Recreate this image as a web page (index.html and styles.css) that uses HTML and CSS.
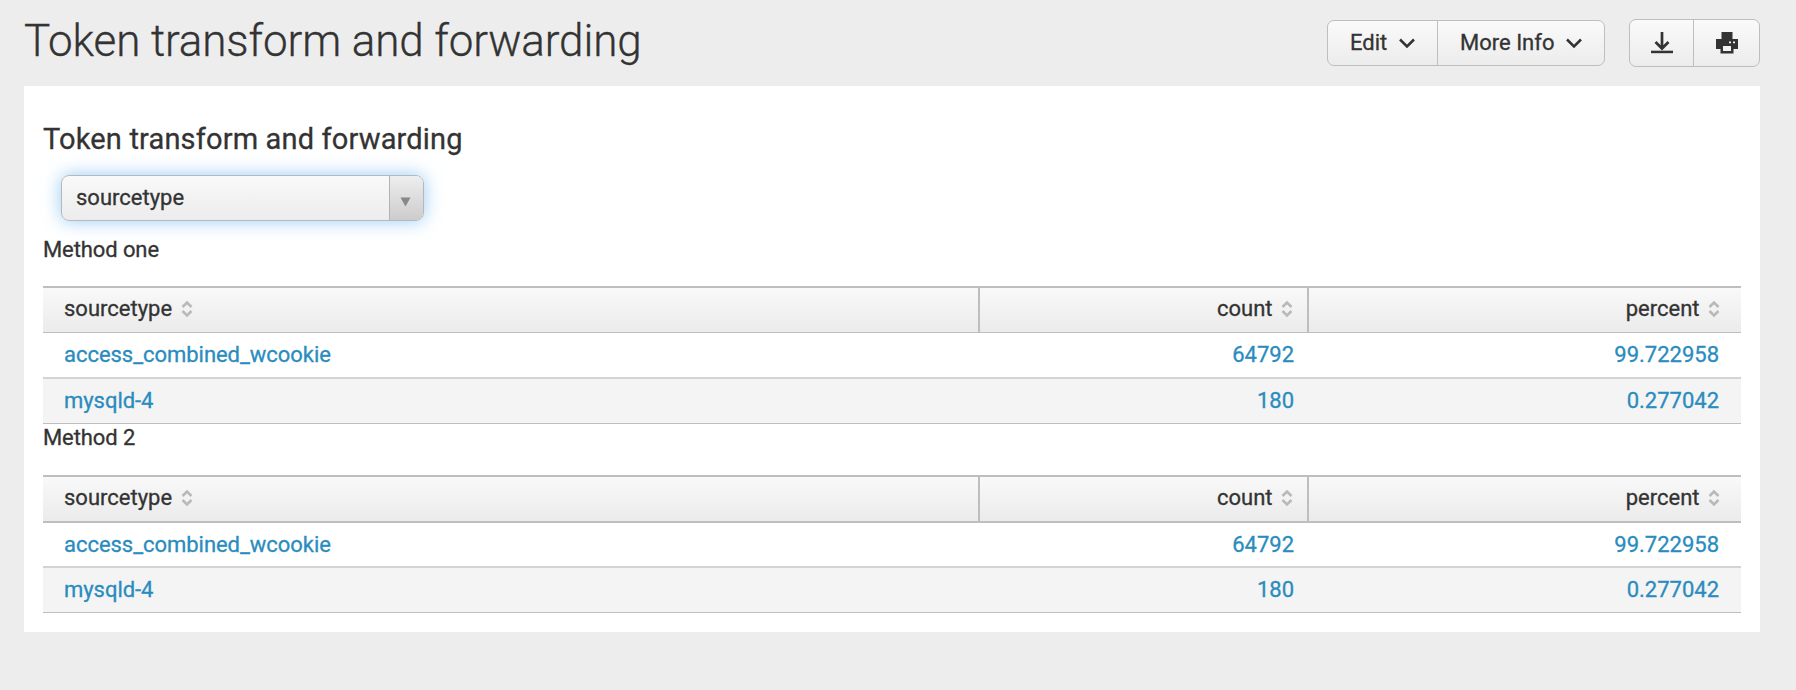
FILE: index.html
```html
<!DOCTYPE html>
<html lang="en">
<head>
<meta charset="utf-8">
<title>Token transform and forwarding</title>
<link rel="stylesheet" href="styles.css">
</head>
<body>
<svg class="defs" aria-hidden="true">
  <symbol id="sort" viewBox="0 0 12 18"><path d="M1.500 7 6 2.600 10.500 7M1.500 11 6 15.400 10.500 11" fill="none" stroke="#b9b9b9" stroke-width="2.600"/></symbol>
  <symbol id="caret" viewBox="0 0 16 11"><path d="M1 1.500 8 8.500 15 1.500" fill="none" stroke="#333" stroke-width="2.500"/></symbol>
</svg>
<header class="header">
  <h1 class="title"><span>Token transform and forwarding</span></h1>
  <div class="actions">
    <div class="group">
      <button class="btn edit"><span>Edit</span><svg class="caret"><use href="#caret"/></svg></button>
      <button class="btn more"><span>More Info</span><svg class="caret"><use href="#caret"/></svg></button>
    </div>
    <div class="group icons">
      <button class="btn download" aria-label="Export"><svg width="22" height="22" viewBox="0 0 22 22"><path d="M11 0v16M4.500 10 11 16.500 17.500 10" fill="none" stroke="#333" stroke-width="2.700"/><path d="M0 18.700h22v2.500H0z" fill="#333"/></svg></button>
      <button class="btn print" aria-label="Print"><svg width="22" height="22" viewBox="0 0 22 22"><path d="M5.500 0h11v7H22v10h-4.500v4.500h-13V17H0V7h5.500z" fill="#333"/><path d="M7 14h8v5H7zM13 9.500h2v1.800h-2zM17 9.500h2v1.800h-2z" fill="#f3f3f3"/></svg></button>
    </div>
  </div>
</header>
<main class="panel">
  <h2 class="heading"><span>Token transform and forwarding</span></h2>
  <div class="select"><span class="value">sourcetype</span><span class="arrow"><svg width="11" height="10" viewBox="0 0 11 10"><path d="M.5.500h10L5.500 9.500z" fill="#888"/></svg></span></div>
  <p class="label first"><span>Method one</span></p>
  <table class="results">
    <thead><tr><th class="c1"><span>sourcetype</span><svg class="sort"><use href="#sort"/></svg></th><th class="c2"><span>count</span><svg class="sort"><use href="#sort"/></svg></th><th class="c3"><span>percent</span><svg class="sort"><use href="#sort"/></svg></th></tr></thead>
    <tbody>
      <tr><td><span>access_combined_wcookie</span></td><td><span>64792</span></td><td><span>99.722958</span></td></tr>
      <tr><td><span>mysqld-4</span></td><td><span>180</span></td><td><span>0.277042</span></td></tr>
    </tbody>
  </table>
  <p class="label second"><span>Method 2</span></p>
  <table class="results thick">
    <thead><tr><th class="c1"><span>sourcetype</span><svg class="sort"><use href="#sort"/></svg></th><th class="c2"><span>count</span><svg class="sort"><use href="#sort"/></svg></th><th class="c3"><span>percent</span><svg class="sort"><use href="#sort"/></svg></th></tr></thead>
    <tbody>
      <tr><td><span>access_combined_wcookie</span></td><td><span>64792</span></td><td><span>99.722958</span></td></tr>
      <tr><td><span>mysqld-4</span></td><td><span>180</span></td><td><span>0.277042</span></td></tr>
    </tbody>
  </table>
</main>
</body>
</html>
```
FILE: styles.css
```css
* { box-sizing: border-box; }
body { margin: 0; height: 690px; background: #ededed; color: #333; font: 22px/26px Roboto, sans-serif; -webkit-text-stroke: .3px; overflow: hidden; }
.defs { position: absolute; width: 0; height: 0; }
.header { display: flex; justify-content: space-between; align-items: flex-start; height: 86px; padding: 0 36px 0 24px; }
.title { margin: 0; padding-top: 15px; font-size: 44px; line-height: 52px; font-weight: 300; letter-spacing: -.12px; white-space: nowrap; }
.actions { display: flex; align-items: center; gap: 24px; padding-top: 19px; }
.group { display: flex; height: 46px; border: 1px solid #bebebe; border-radius: 7px; background: linear-gradient(#fafafa, #ececec); }
.icons { height: 48px; }
.btn { display: flex; align-items: center; margin: 0; padding: 0; border: 0; background: none; color: inherit; font: inherit; }
.btn + .btn { border-left: 1px solid #bebebe; }
.caret { width: 16px; height: 11px; }
.edit { width: 109px; padding-left: 22px; gap: 12px; }
.more { width: 167px; padding-left: 22px; gap: 12px; }
.download { width: 63px; justify-content: center; }
.print { width: 66px; justify-content: center; }
.btn svg { flex: none; }
.panel { width: 1736px; height: 546px; margin-left: 24px; padding: 35px 19px 0; background: #fff; }
.heading { margin: 0; height: 54px; font-size: 29px; line-height: 36px; font-weight: 400; letter-spacing: .16px; }
.select { display: flex; width: 363px; height: 46px; margin-left: 18px; border: 1px solid #b3b9be; border-radius: 8px; background: linear-gradient(#f9f9f9, #ececec); box-shadow: 0 0 18px rgba(82, 168, 236, .6); overflow: hidden; }
.value { flex: 1; padding: 9px 14px 8px; }
.arrow { display: flex; align-items: center; justify-content: center; width: 34px; padding: 7px 3px 0 0; border-left: 1px solid #b3b3b3; background: linear-gradient(#eee, #ccc); }
.label { margin: 0; letter-spacing: -.1px; }
.first { height: 65px; padding-top: 16px; }
.second { height: 51px; padding-top: 1px; }
.results { width: 1698px; table-layout: fixed; border-spacing: 0; }
.results th, .results td { padding: 0 21px; vertical-align: middle; text-align: right; font-weight: 400; line-height: 26px; white-space: nowrap; }
.results th { height: 47px; padding-right: 21px; padding-bottom: 2px; border-top: 2px solid #bebebe; border-bottom: 1px solid #bebebe; background: linear-gradient(#f9f9f9, #ebebeb); }
.thick th { height: 48px; border-bottom-width: 2px; }
.results th:first-child, .results td:first-child { text-align: left; }
.results td:first-child { letter-spacing: -.04px; }
.results .c1 { width: 937px; border-right: 2px solid #bebebe; }
.results .c2 { width: 329px; padding-right: 14px; border-right: 2px solid #bebebe; }
.results .c3 { width: 432px; }
.results td { height: 46px; color: #2a8cbe; border-bottom: 2px solid #d4d4d4; }
.results td:nth-child(2) { padding-right: 15px; }
.results td:nth-child(3) { padding-right: 22px; }
.thick tr:first-child td { height: 45px; }
.results tr:last-child td { height: 45px; background: #f4f4f4; border-bottom: 1px solid #bebebe; }
.sort { width: 12px; height: 18px; margin-left: 8.500px; vertical-align: -2px; }
```
